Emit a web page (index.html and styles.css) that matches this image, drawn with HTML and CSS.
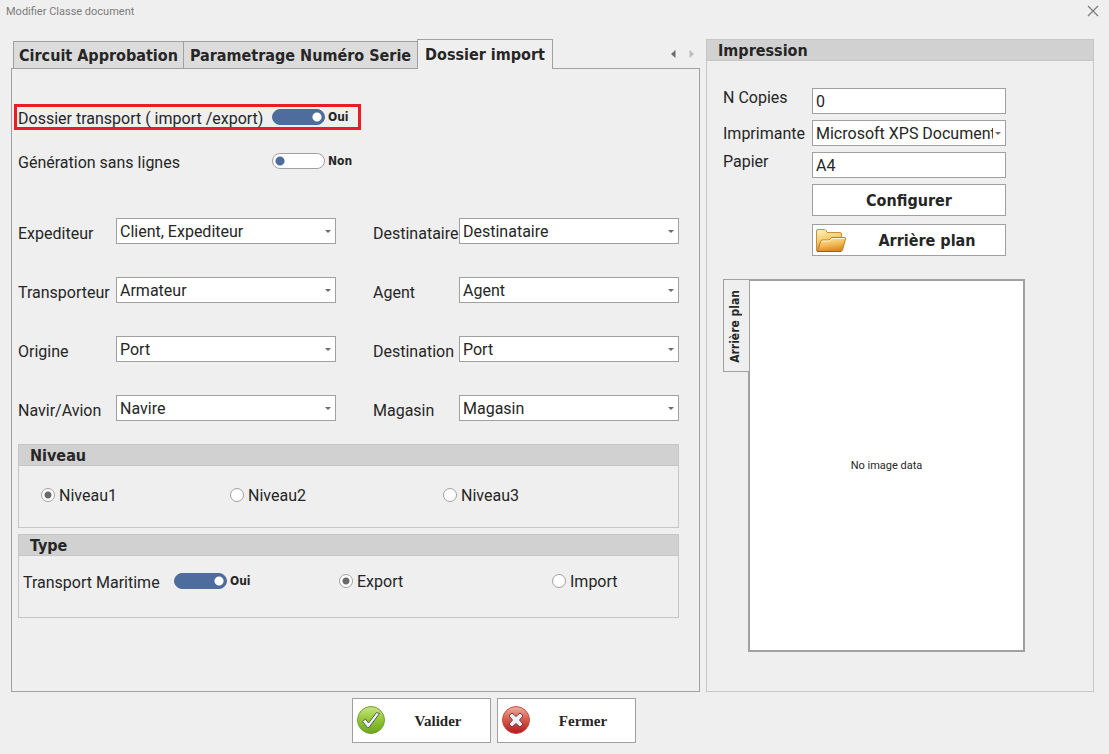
FILE: index.html
```html
<!DOCTYPE html>
<html lang="fr">
<head>
<meta charset="utf-8">
<meta name="viewport" content="width=device-width, initial-scale=1">
<title>Modifier Classe document</title>
<link rel="stylesheet" href="styles.css">
</head>
<body>
<div class="window">
  <header class="titlebar">
    <h1 class="titlebar-text">Modifier Classe document</h1>
    <button class="close" type="button" aria-label="Fermer la fenêtre">
      <svg width="12" height="12" viewBox="0 0 12 12"><path d="M1 1L11 11M11 1L1 11" stroke="#7d7d7d" stroke-width="1.3" fill="none"/></svg>
    </button>
  </header>

  <main class="content">
    <div class="tabs">
      <div class="tabstrip">
        <div class="tablist" role="tablist">
          <button class="tab" type="button" role="tab" aria-selected="false">Circuit Approbation</button>
          <button class="tab" type="button" role="tab" aria-selected="false">Parametrage Numéro Serie</button>
          <button class="tab active" type="button" role="tab" aria-selected="true">Dossier import</button>
        </div>
        <div class="scrollers">
          <button class="scroller" type="button" aria-label="Onglet précédent"><svg width="5" height="8" viewBox="0 0 5 8"><path d="M4.500 0V8L0 4Z" fill="#6a6a6a"/></svg></button>
          <button class="scroller" type="button" aria-label="Onglet suivant" disabled><svg width="5" height="8" viewBox="0 0 5 8"><path d="M0.500 0V8L5 4Z" fill="#bdbdbd"/></svg></button>
        </div>
      </div>

      <div class="panel" role="tabpanel">
        <div class="switch-row highlighted">
          <label for="transport">Dossier transport ( import /export)</label>
          <input class="switch" type="checkbox" role="switch" id="transport" checked>
          <span class="switch-state">Oui</span>
        </div>
        <div class="switch-row">
          <label for="sans-lignes">Génération sans lignes</label>
          <input class="switch" type="checkbox" role="switch" id="sans-lignes">
          <span class="switch-state">Non</span>
        </div>

        <div class="fields">
          <label for="expediteur">Expediteur</label>
          <span class="combo"><select id="expediteur"><option>Client, Expediteur</option></select></span>
          <label for="destinataire">Destinataire</label>
          <span class="combo"><select id="destinataire"><option>Destinataire</option></select></span>

          <label for="transporteur">Transporteur</label>
          <span class="combo"><select id="transporteur"><option>Armateur</option></select></span>
          <label for="agent">Agent</label>
          <span class="combo"><select id="agent"><option>Agent</option></select></span>

          <label for="origine">Origine</label>
          <span class="combo"><select id="origine"><option>Port</option></select></span>
          <label for="destination">Destination</label>
          <span class="combo"><select id="destination"><option>Port</option></select></span>

          <label for="navire">Navir/Avion</label>
          <span class="combo"><select id="navire"><option>Navire</option></select></span>
          <label for="magasin">Magasin</label>
          <span class="combo"><select id="magasin"><option>Magasin</option></select></span>
        </div>

        <section class="group">
          <h2 class="group-title">Niveau</h2>
          <div class="levels">
            <label class="radio"><input type="radio" name="niveau" checked>Niveau1</label>
            <label class="radio"><input type="radio" name="niveau">Niveau2</label>
            <label class="radio"><input type="radio" name="niveau">Niveau3</label>
          </div>
        </section>

        <section class="group">
          <h2 class="group-title">Type</h2>
          <div class="types">
            <div class="type-switch">
              <label for="maritime">Transport Maritime</label>
              <input class="switch" type="checkbox" role="switch" id="maritime" checked>
              <span class="switch-state">Oui</span>
            </div>
            <label class="radio"><input type="radio" name="sens" checked>Export</label>
            <label class="radio"><input type="radio" name="sens">Import</label>
          </div>
        </section>
      </div>
    </div>

    <section class="group print">
      <h2 class="group-title">Impression</h2>
      <div class="print-body">
        <div class="print-fields">
          <label class="raised" for="copies">N Copies</label>
          <input class="text" id="copies" type="text" value="0">
          <label for="imprimante">Imprimante</label>
          <span class="combo"><select class="wide" id="imprimante"><option>Microsoft XPS Document</option></select></span>
          <label class="raised" for="papier">Papier</label>
          <input class="text" id="papier" type="text" value="A4">
        </div>
        <div class="print-actions">
          <button class="button" type="button">Configurer</button>
          <button class="button with-icon" type="button">
            <svg class="folder" width="32" height="26" viewBox="0 0 32 26" aria-hidden="true">
              <defs>
                <linearGradient id="back" x1="0" y1="0" x2="0.300" y2="1"><stop offset="0" stop-color="#fff3b8"/><stop offset="0.500" stop-color="#f5cf74"/><stop offset="1" stop-color="#d58a2c"/></linearGradient>
                <linearGradient id="front" x1="0" y1="0" x2="0.300" y2="1"><stop offset="0" stop-color="#ffe9a6"/><stop offset="0.550" stop-color="#f3bf5d"/><stop offset="1" stop-color="#dc8a22"/></linearGradient>
              </defs>
              <path d="M1.500 23V3Q1.500 1.500 3 1.500H9.500Q10.500 1.500 11 2.500L12 4.500H25Q26.500 4.500 26.500 6V14L22 23Z" fill="url(#back)" stroke="#c9903c"/>
              <path d="M2.500 23.500L5.500 13.500Q6 12 7.500 12H14L16.500 9.500H29.500Q31 9.500 30.500 11L27.500 22Q27 23.500 25.500 23.500Z" fill="url(#front)" stroke="#c47c25"/>
              <path d="M6.500 14Q7 13 8 13H14.500L17 10.500H29.500" fill="none" stroke="#fff6cf"/>
              <path d="M2 23.500H26" stroke="#a85a12" fill="none"/>
            </svg>
            <span>Arrière plan</span>
          </button>
        </div>
        <div class="preview">
          <button class="side-tab" type="button"><span>Arrière plan</span></button>
          <div class="picture">No image data</div>
        </div>
      </div>
    </section>
  </main>

  <footer class="actions">
    <button class="button action" type="button">
      <svg width="30" height="30" viewBox="0 0 30 30" aria-hidden="true">
        <defs><linearGradient id="green" x1="0" y1="0" x2="0" y2="1"><stop offset="0" stop-color="#cbe486"/><stop offset="0.450" stop-color="#98c93c"/><stop offset="1" stop-color="#6ba51c"/></linearGradient></defs>
        <circle cx="15" cy="14" r="13.500" fill="url(#green)" stroke="#6f9f35"/>
        <path d="M6.500 15.500L9.500 13L12.500 17L20.500 6.500L23.500 7.500L13 21.500H11.500Z" fill="#eef3fb" stroke="#50604a" stroke-width="1" stroke-linejoin="round"/>
      </svg>
      <span>Valider</span>
    </button>
    <button class="button action" type="button">
      <svg width="30" height="30" viewBox="0 0 30 30" aria-hidden="true">
        <defs><linearGradient id="red" x1="0" y1="0" x2="0" y2="1"><stop offset="0" stop-color="#efb0a2"/><stop offset="0.450" stop-color="#d9604f"/><stop offset="1" stop-color="#b5151a"/></linearGradient></defs>
        <circle cx="15" cy="14" r="13.500" fill="url(#red)" stroke="#c0504a"/>
        <path d="M11 7L15 10.500L19 7L22 10L18.500 14L22 18L19 21L15 17.500L11 21L8 18L11.500 14L8 10Z" fill="#eef1fa" stroke="#7a3a3e" stroke-width="1" stroke-linejoin="round"/>
      </svg>
      <span>Fermer</span>
    </button>
  </footer>
</div>
</body>
</html>
```

FILE: styles.css
```css
:root {
  --bg: #efefef;
  --line: #a0a0a0;
  --group-line: #c6c6c6;
  --text: #262626;
  --blue: #4e6d9c;
  --sans: Roboto, "Noto Sans", sans-serif;
  --bold: "DejaVu Sans Condensed", "DejaVu Sans", sans-serif;
}

* { box-sizing: border-box; }

body {
  margin: 0;
  background: var(--bg);
  color: var(--text);
  font: 16px/20px var(--sans);
}

button, input, select { font: inherit; color: inherit; margin: 0; }
button { padding: 0; border: 0; background: none; }
h1, h2 { margin: 0; }

.window {
  min-height: 100vh;
  display: flex;
  flex-direction: column;
  padding-bottom: 11px;
}

.titlebar {
  display: flex;
  justify-content: space-between;
  align-items: center;
  height: 22px;
  padding: 0 10px 0 6px;
}
.titlebar-text { padding-top: 2px; font: 11px/20px var(--sans); color: #7c7c7c; }
.close { display: flex; }

.content {
  flex: 1;
  display: grid;
  grid-template-columns: 689fr 388fr;
  gap: 6px;
  padding: 17px 15px 6px 11px;
}

/* Tabs */
.tabs { display: flex; flex-direction: column; min-width: 0; }
.tabstrip { display: flex; justify-content: space-between; height: 29px; padding: 0 6px 0 2px; }
.tablist { display: flex; align-items: flex-end; }
.tab {
  height: 27px;
  padding: 1px 5px 0;
  border: 1px solid var(--line);
  border-bottom: 0;
  background: #dcdcdc;
  font: bold 16px/24px var(--bold);
  white-space: nowrap;
}
.tab + .tab { padding: 1px 6px 0; margin-left: -1px; }
.tab.active {
  position: relative;
  height: 30px;
  margin-bottom: -1px;
  background: var(--bg);
}
.tab + .tab.active { padding: 0 7px; }
.scrollers { display: flex; align-items: center; gap: 13px; }
.scroller { display: flex; }
.panel {
  flex: 1;
  border: 1px solid var(--line);
  padding: 35px 20px 35px 2px;
}

/* Switches */
.switch-row {
  display: grid;
  grid-template-columns: 254px 53px auto;
  align-items: center;
  width: 347px;
  height: 28px;
  padding-left: 4px;
}
.switch-row + .switch-row { margin-top: 18px; }
.switch-row label, .type-switch label { padding-top: 2px; }
.highlighted { height: 26px; border: 3px solid #ed1c24; padding-left: 1px; }
.switch {
  appearance: none;
  width: 53px;
  height: 16px;
  margin-bottom: 2px;
  border: 1px solid var(--line);
  border-radius: 8px;
  background: radial-gradient(circle at 7px 7px, var(--blue) 4px, transparent 5px) #fff;
}
.switch:checked {
  border-color: var(--blue);
  background: radial-gradient(circle at 44px 7px, #fff 4px, transparent 5px) var(--blue);
}
.switch-state { padding-left: 3px; margin-bottom: 2px; font: bold 12px/16px var(--bold); }

/* Fields */
.fields {
  display: grid;
  grid-template-columns: 98px 1fr 123px 1fr;
  row-gap: 33px;
  margin: 42px 0 23px;
  padding-left: 4px;
}
.fields label { padding-top: 6px; white-space: nowrap; }
.fields label:nth-of-type(even) { padding-left: 37px; }
.combo { position: relative; display: block; min-width: 0; }
.combo::after {
  content: "";
  position: absolute;
  right: 5px;
  top: 12px;
  width: 6px;
  height: 3px;
  background: #6a6a6a;
  clip-path: polygon(0 0, 100% 0, 50% 100%);
  pointer-events: none;
}
select, .text {
  display: block;
  appearance: none;
  width: 100%;
  height: 26px;
  padding: 2px 18px 0 3px;
  border: 1px solid var(--line);
  border-radius: 0;
  background: #fff;
}
.text { padding-top: 0; }
.wide { padding-right: 12px; }

/* Groups */
.group { border: 1px solid var(--group-line); }
.panel .group { margin-left: 4px; }
.group + .group { margin-top: 6px; }
.group-title {
  height: 21px;
  padding-left: 11px;
  border-bottom: 1px solid var(--group-line);
  background: #d1d1d1;
  font: bold 16px/22px var(--bold);
}
.levels {
  display: grid;
  grid-template-columns: 189fr 213fr 235fr;
  padding: 19px 0 20px 22px;
}
.types {
  display: grid;
  grid-template-columns: 316fr 213fr 126fr;
  align-items: center;
  padding: 15px 0 24px 4px;
}
.type-switch { display: grid; grid-template-columns: 151px 53px auto; align-items: center; }
.radio { display: flex; align-items: center; gap: 4px; line-height: 22px; }
.radio input {
  appearance: none;
  width: 14px;
  height: 14px;
  margin-bottom: 2px;
  border: 1px solid var(--line);
  border-radius: 50%;
  background: #fff;
}
.radio input:checked { background: radial-gradient(circle at center, #6a6a6a 3px, transparent 4px) #fff; }

/* Print */
.print { min-width: 0; }
.print-body { padding: 27px 16px 0; }
.print-fields {
  display: grid;
  grid-template-columns: 89px 194px;
  row-gap: 6px;
}
.print-fields label { padding-top: 4px; }
.print-fields .raised { padding-top: 0; }
.print-actions {
  display: flex;
  flex-direction: column;
  gap: 8px;
  width: 194px;
  margin: 6px 0 0 89px;
}
.button {
  height: 32px;
  padding-top: 2px;
  border: 1px solid var(--line);
  background: #fff;
  font: bold 16px/20px var(--bold);
}
.with-icon { display: grid; grid-template-columns: 34px 1fr; align-items: center; padding-left: 2px; }
.preview { display: flex; align-items: flex-start; margin-top: 23px; }
.side-tab {
  position: relative;
  width: 27px;
  height: 93px;
  padding-top: 6px;
  margin-right: -2px;
  border: 1px solid var(--line);
  background: var(--bg);
  font: bold 12px/16px var(--bold);
}
.side-tab span { writing-mode: vertical-rl; transform: rotate(180deg); display: inline-block; margin-right: 4px; }
.picture {
  display: flex;
  align-items: center;
  justify-content: center;
  width: 277px;
  height: 373px;
  border: 2px solid var(--line);
  background: #fff;
  font-size: 11px;
}

/* Footer */
.actions { display: flex; gap: 6px; padding-left: 352px; }
.action {
  display: grid;
  grid-template-columns: 30px 1fr;
  align-items: center;
  width: 139px;
  height: 45px;
  padding: 0 0 0 3px;
  font: bold 15px/20px "Liberation Serif", serif;
}
```
